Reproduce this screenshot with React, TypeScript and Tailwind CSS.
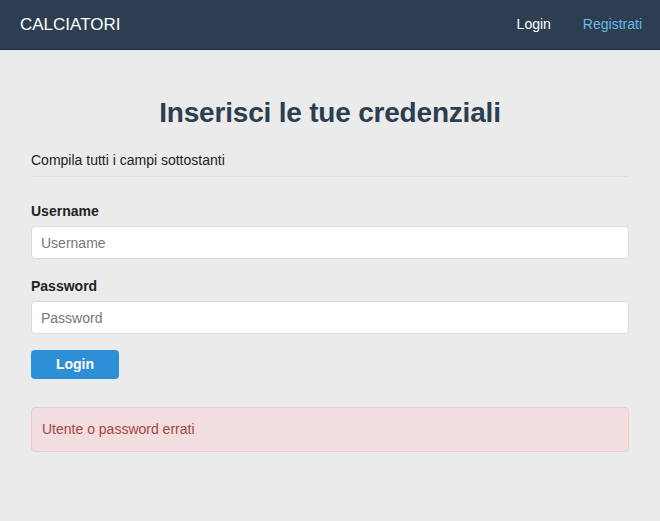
export default function App() {
  return (
    <div className="min-h-[521px] bg-[#ebebeb] font-['Liberation_Sans',Arial,sans-serif] text-[#222]">
      <nav className="flex h-[50px] items-center justify-between border-b border-[#1f2d3a] bg-[#2c3e50] px-5">
        <span className="text-[17px] text-white">CALCIATORI</span>
        <div className="flex items-center gap-[32px] text-[14px]">
          <a className="text-white">Login</a>
          <a className="mr-[-2px] text-[#6cb8ea]">Registrati</a>
        </div>
      </nav>

      <main className="px-[31px]">
        <h1 className="pt-[46px] text-center text-[28px] leading-[34px] font-bold tracking-[-0.2px] text-[#2c3e50]">
          Inserisci le tue credenziali
        </h1>
        <p className="mt-[20px] border-b border-[#e0e0e0] pb-[6px] text-[14px] leading-[20px]">
          Compila tutti i campi sottostanti
        </p>

        <form className="mt-[24px]">
          <label className="block text-[14px] leading-[20px] font-bold text-[#222]">Username</label>
          <input
            className="mt-[5px] block h-[33px] w-full rounded-[4px] border border-[#dcdcdc] bg-white px-[9px] text-[14px] placeholder:text-[#777]"
            placeholder="Username"
          />
          <label className="mt-[17px] block text-[14px] leading-[20px] font-bold text-[#222]">Password</label>
          <input
            type="password"
            className="mt-[5px] block h-[33px] w-full rounded-[4px] border border-[#dcdcdc] bg-white px-[9px] text-[14px] placeholder:text-[#777]"
            placeholder="Password"
          />
          <button
            type="button"
            className="mt-[16px] block h-[29px] w-[88px] rounded-[4px] bg-[#2d8fd5] text-[14px] font-bold text-white"
          >
            Login
          </button>
        </form>

        <div className="mt-[28px] flex h-[45px] items-center rounded-[4px] border border-[#ebccd1] bg-[#f2dede] px-[10px] text-[14px] text-[#a94442]">
          Utente o password errati
        </div>
      </main>
    </div>
  )
}
